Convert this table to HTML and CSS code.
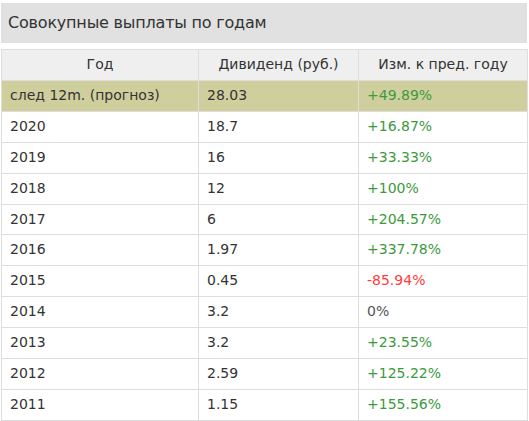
FILE: index.html
```html
<!DOCTYPE html>
<html lang="ru">
<head>
<meta charset="utf-8">
<link rel="stylesheet" href="styles.css">
</head>
<body>
<div class="panel">
  <div class="title">Совокупные выплаты по годам</div>
  <table class="divs">
    <colgroup><col class="c1"><col class="c2"><col class="c3"></colgroup>
    <thead>
      <tr><th>Год</th><th>Дивиденд (руб.)</th><th>Изм. к пред. году</th></tr>
    </thead>
    <tbody>
      <tr class="hl"><td>след 12m. (прогноз)</td><td>28.03</td><td class="up">+49.89%</td></tr>
      <tr><td>2020</td><td>18.7</td><td class="up">+16.87%</td></tr>
      <tr><td>2019</td><td>16</td><td class="up">+33.33%</td></tr>
      <tr><td>2018</td><td>12</td><td class="up">+100%</td></tr>
      <tr><td>2017</td><td>6</td><td class="up">+204.57%</td></tr>
      <tr><td>2016</td><td>1.97</td><td class="up">+337.78%</td></tr>
      <tr><td>2015</td><td>0.45</td><td class="down">-85.94%</td></tr>
      <tr><td>2014</td><td>3.2</td><td class="zero">0%</td></tr>
      <tr><td>2013</td><td>3.2</td><td class="up">+23.55%</td></tr>
      <tr><td>2012</td><td>2.59</td><td class="up">+125.22%</td></tr>
      <tr><td>2011</td><td>1.15</td><td class="up">+155.56%</td></tr>
    </tbody>
  </table>
</div>
</body>
</html>
```

FILE: styles.css
```css
html, body {
  margin: 0;
  padding: 0;
  background: #ffffff;
}
body {
  font-family: "DejaVu Sans", "Noto Sans", sans-serif;
  color: #333333;
}
.panel {
  padding: 3px 2px 0 1px;
}
.title {
  background: #e1e1e1;
  height: 40px;
  line-height: 40px;
  padding-left: 7px;
  font-size: 16px;
  letter-spacing: -0.2px;
  color: #333;
}
.divs {
  margin-top: 6px;
  width: 526px;
  border-collapse: collapse;
  table-layout: fixed;
  font-size: 14px;
}
.c1 { width: 197px; }
.c2 { width: 160px; }
.c3 { width: 169px; }
.divs th, .divs td {
  border: 1px solid #dddddd;
  height: 19.9px;
  line-height: 19.9px;
  padding: 5px 8px;
  white-space: nowrap;
  overflow: hidden;
}
.divs th {
  background: #efefef;
  font-weight: normal;
  text-align: center;
}
.divs td {
  text-align: left;
}
.divs tr.hl td {
  background: #cfcf9e;
}
.up { color: #3c9a3c; }
.down { color: #ff3b3b; }
.zero { color: #555555; }
```
